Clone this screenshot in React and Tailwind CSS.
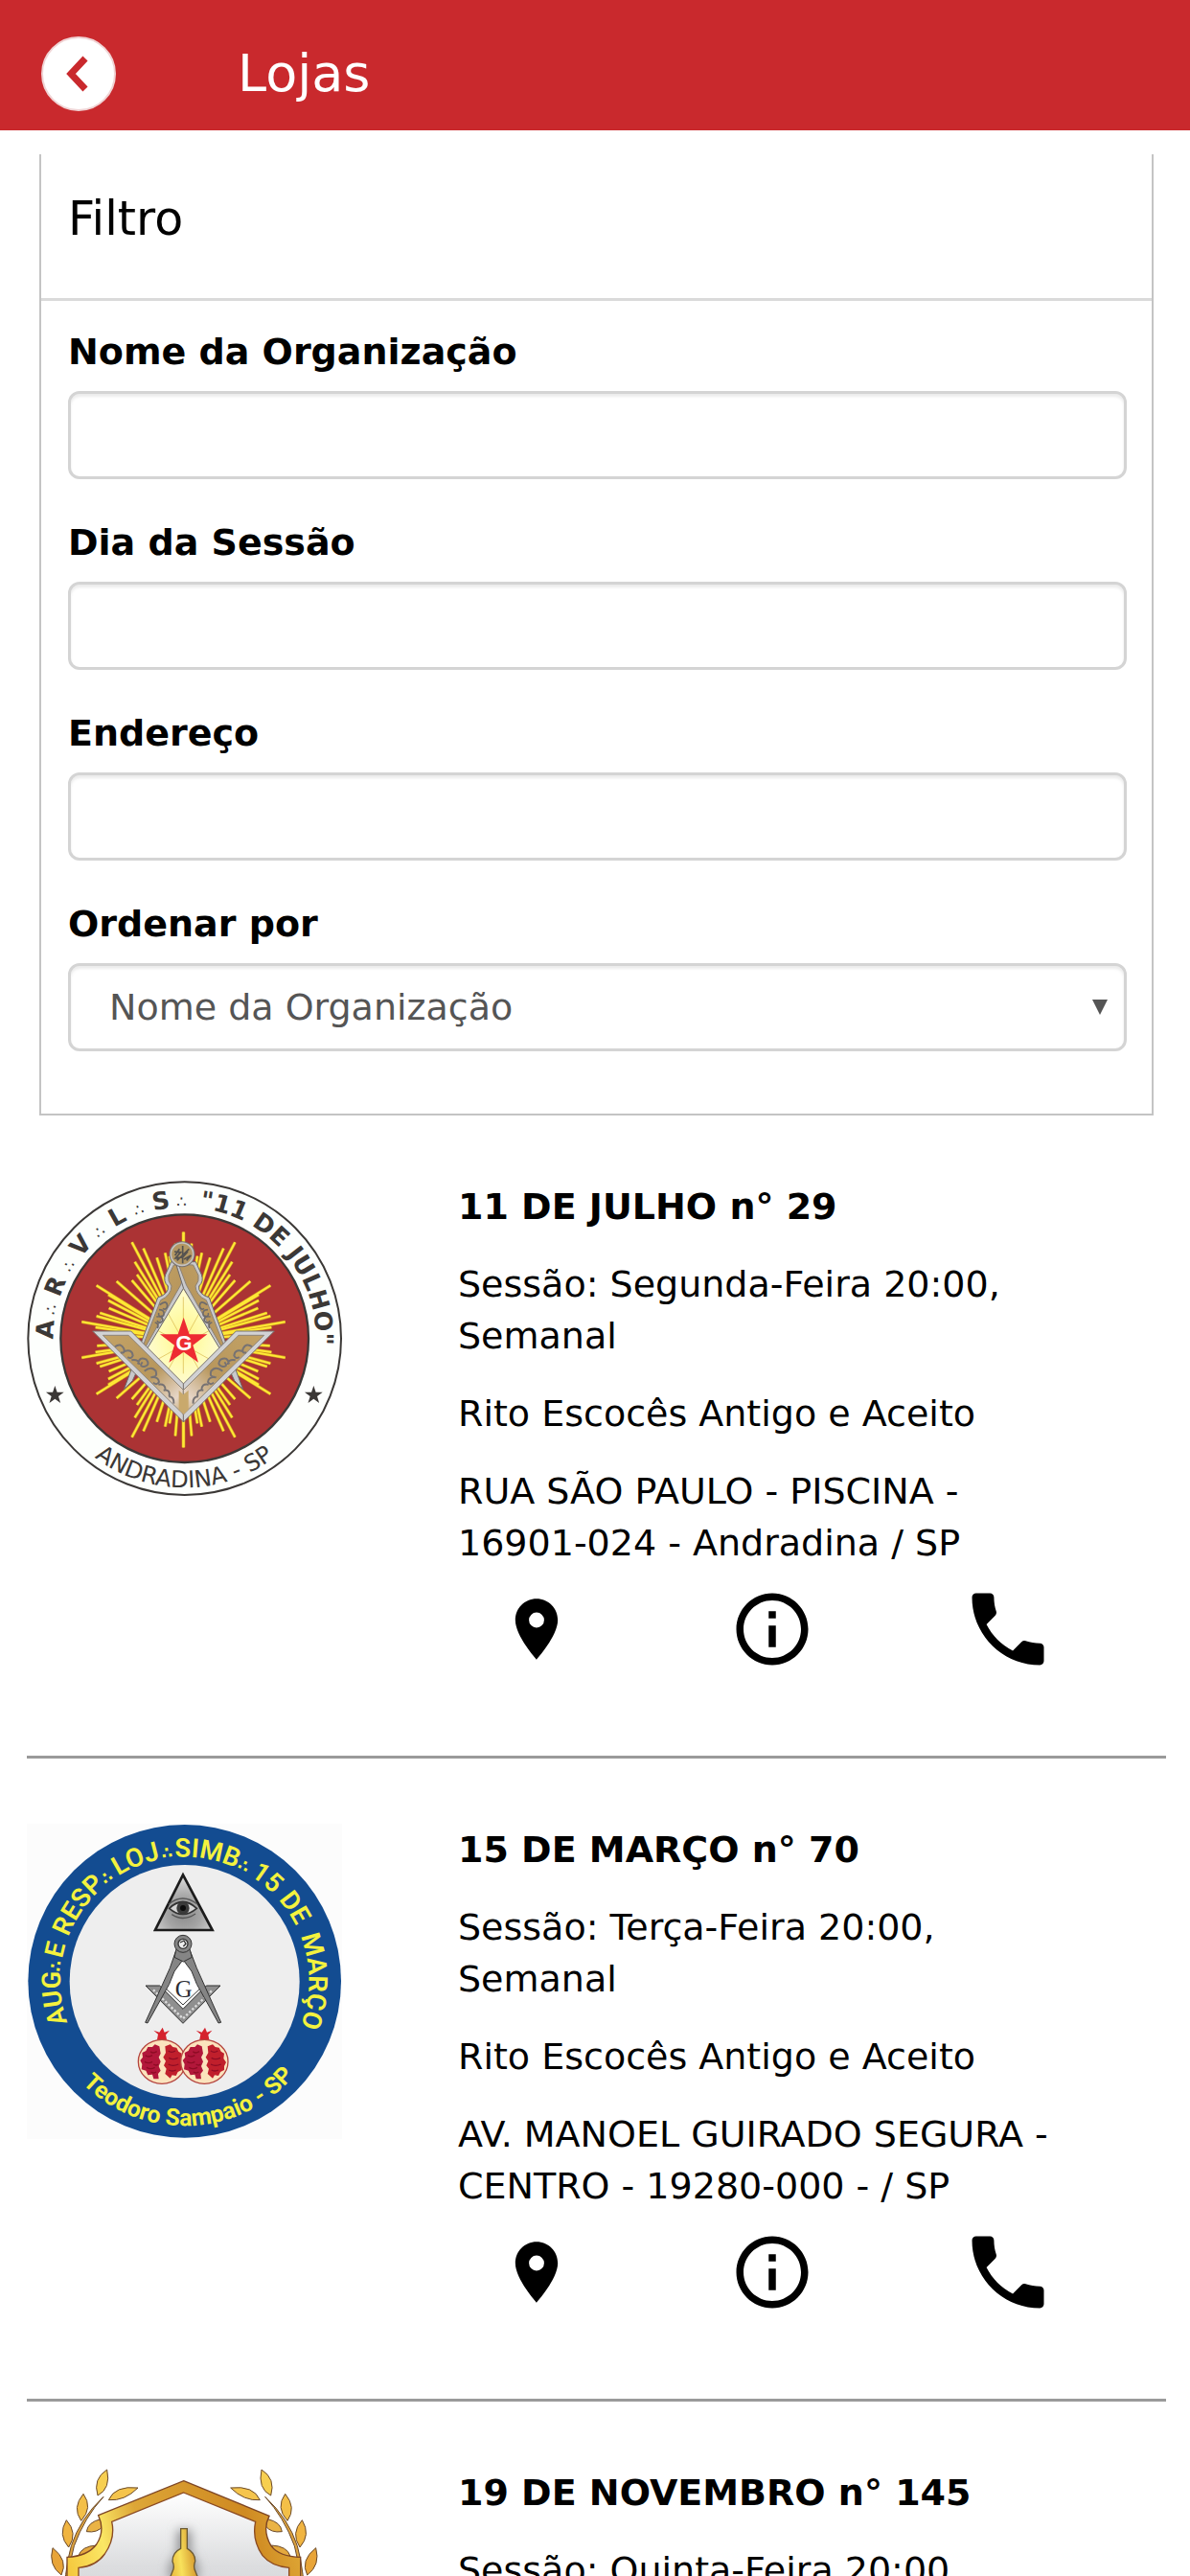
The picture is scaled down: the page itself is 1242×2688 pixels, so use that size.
import { useState } from 'react'
import { MdInfoOutline, MdPhone, MdPlace } from 'react-icons/md'

const RAY_ENDS = [
  [514, 197], [540, 233], [558, 272], [572, 262], [598, 277], [640, 248], [676, 229], [667, 290], [660, 330],
  [676, 348], [724, 351], [787, 364], [750, 393], [750, 411], [748, 435], [776, 450], [787, 460], [833, 478],
  [790, 495], [785, 515],
]

// every ray of one quadrant is repeated in the other three
const RAYS = RAY_ENDS.flatMap(([x, y]) => [
  [x, y],
  [1029 - x, y],
  [x, 1068 - y],
  [1029 - x, 1068 - y],
])

const STAR = '0,-76 18,-23 74,-23 29,11 46,65 0,32 -46,65 -29,11 -74,-23 -18,-23'

function CompassLeg() {
  return (
    <g strokeLinejoin="round">
      <path
        d="M476 290 L458 330 Q450 352 466 366 Q470 390 434 402 L328 690 L355 662 L402 560 L514 374 L540 290 Z"
        fill="#c9c9cb"
        stroke="#6b6869"
        strokeWidth="3"
      />
      <path
        d="M484 300 L468 332 Q464 350 477 366 Q476 395 443 410 L388 552 L396 556 L505 364 L530 298 Z"
        fill="url(#bronze)"
        stroke="#8b8176"
        strokeWidth="3"
      />
      <path
        d="M440 425 q22 -18 24 3 q-3 15 -14 8 M438 440 q20 0 14 18 q-18 8 -15 -8 M430 462 q20 -4 20 12 q-12 14 -18 0 M425 480 q14 2 8 18"
        fill="none"
        stroke="#6d6a6b"
        strokeWidth="5"
      />
    </g>
  )
}

function SquareArm() {
  return (
    <g>
      <path d="M230 507 L350 507 L515 672 L515 792 Z" fill="#d2d2d4" stroke="#77706c" strokeWidth="3" />
      <path d="M262 520 L342 520 L515 692 L515 768 Z" fill="url(#bronze)" stroke="#8f8578" strokeWidth="3" />
      <path
        d="M300 556 q18 -14 28 6 q4 16 -10 12 M330 570 q24 -8 26 14 q-6 12 -16 4 M352 598 q24 -4 24 14 M372 610 q4 -26 26 -14 q14 16 -6 22 q-18 0 -6 -14 M392 632 q22 -18 36 0 q6 20 -12 18 M412 652 q24 -4 26 14 q-8 12 -18 2 M436 674 q22 -4 22 18 M452 692 q22 -4 18 20 M468 712 q18 0 16 22"
        fill="none"
        stroke="#767273"
        strokeWidth="6"
      />
    </g>
  )
}

function LogoOnzeDeJulho() {
  return (
    <svg viewBox="24 36 987 987" className="block w-full" role="img" aria-label="11 DE JULHO">
      <defs>
        <linearGradient id="bronze" x1="0" y1="0" x2="1" y2="1">
          <stop offset="0" stopColor="#c3a265" />
          <stop offset="0.55" stopColor="#b8975d" />
          <stop offset="0.85" stopColor="#e6d6c8" />
          <stop offset="1" stopColor="#c5a364" />
        </linearGradient>
        <radialGradient id="glow">
          <stop offset="0" stopColor="#fff58a" />
          <stop offset="0.6" stopColor="#fffcb4" />
          <stop offset="1" stopColor="#fffad0" />
        </radialGradient>
        <path id="julhoTop" d="M107 530 A411 411 0 0 1 929 530 A411 411 0 0 1 900 680" />
        <path id="julhoBottom" d="M51 530 A467 467 0 0 0 985 530" />
      </defs>
      <circle cx="518" cy="530" r="490" fill="#fdfffd" stroke="#3b3836" strokeWidth="6" />
      <circle cx="518" cy="530" r="388" fill="#ab3334" stroke="#3b3836" strokeWidth="7" />
      <g stroke="#d09a20" strokeWidth="10">
        {RAYS.map(([x, y], i) => (
          <line key={i} x1="514" y1="534" x2={x} y2={y} />
        ))}
      </g>
      <g stroke="#ffe936" strokeWidth="6">
        {RAYS.map(([x, y], i) => (
          <line key={i} x1="514" y1="534" x2={x} y2={y} />
        ))}
      </g>
      <path d="M514 374 L632 560 L514 675 L398 560 Z" fill="url(#glow)" />
      <g stroke="#d8b548" strokeWidth="2">
        <path d="M514 400 V640 M425 500 L605 600 M605 500 L425 600 M460 440 L570 640 M570 440 L460 640" />
      </g>
      <CompassLeg />
      <g transform="matrix(-1 0 0 1 1029 0)">
        <CompassLeg />
      </g>
      <circle cx="510" cy="266" r="38" fill="#b39763" stroke="#77706c" strokeWidth="5" />
      <circle cx="510" cy="266" r="35" fill="none" stroke="#c4c2c0" strokeWidth="5" />
      <path
        d="M512 240 V295 M486 258 L506 260 L490 278 L512 276 L528 258 M494 286 L532 250 M516 282 L538 270 L524 286 M488 270 L502 250"
        fill="none"
        stroke="#55524f"
        strokeWidth="5"
      />
      <SquareArm />
      <g transform="matrix(-1 0 0 1 1029 0)">
        <SquareArm />
      </g>
      <path d="M500 692 L514 706 L530 692 L530 752 L515 767 L500 752 Z" fill="#c9a96c" />
      <polygon points={STAR} transform="translate(515 540)" fill="#ee2b32" />
      <text x="516" y="567" textAnchor="middle" fontSize="66" fontWeight="700" fill="#fff" fontFamily="Liberation Sans, sans-serif">
        G
      </text>
      <g fill="#3b3836" fontFamily="DejaVu Sans, sans-serif" fontWeight="700" fontSize="76" textAnchor="middle">
        <text><textPath href="#julhoTop" startOffset="27">A</textPath></text>
        <text><textPath href="#julhoTop" startOffset="158">R</textPath></text>
        <text><textPath href="#julhoTop" startOffset="300">V</textPath></text>
        <text><textPath href="#julhoTop" startOffset="438">L</textPath></text>
        <text><textPath href="#julhoTop" startOffset="575">S</textPath></text>
      </g>
      <g fill="#3b3836" fontFamily="DejaVu Sans, sans-serif" fontSize="50" textAnchor="middle">
        <text><textPath href="#julhoTop" startOffset="88">∴</textPath></text>
        <text><textPath href="#julhoTop" startOffset="230">∴</textPath></text>
        <text><textPath href="#julhoTop" startOffset="368">∴</textPath></text>
        <text><textPath href="#julhoTop" startOffset="504">∴</textPath></text>
        <text><textPath href="#julhoTop" startOffset="636">∴</textPath></text>
      </g>
      <text fill="#3b3836" fontFamily="DejaVu Sans, sans-serif" fontWeight="700" fontSize="76">
        <textPath href="#julhoTop" startOffset="692">&quot;11 DE JULHO&quot;</textPath>
      </text>
      <text fill="#3b3836" fontFamily="DejaVu Sans, sans-serif" fontSize="73" textAnchor="middle">
        <textPath href="#julhoBottom" startOffset="732">ANDRADINA - SP</textPath>
      </text>
      <polygon points={STAR} transform="translate(112 707) scale(0.38)" fill="#3b3836" />
      <polygon points={STAR} transform="translate(922 707) scale(0.38)" fill="#3b3836" />
    </svg>
  )
}

function Pomegranate({ x }) {
  return (
    <g transform={`translate(${x} 783)`}>
      <path d="M-16 -64 L-12 -86 L-26 -98 L-8 -92 L2 -107 L8 -92 L24 -98 L12 -84 L16 -64 Z" fill="#d5222d" />
      <ellipse rx="74" ry="69" fill="#fbe3bd" stroke="#b5443f" strokeWidth="4" />
      <path
        d="M-8 -48 L-22 -54 L-30 -46 L-44 -46 L-50 -34 L-62 -28 L-60 -14 L-68 -4 L-62 8 L-64 24 L-50 28 L-44 42 L-30 40 L-26 54 L-10 54 L-12 38 L-4 28 L-10 14 L-4 0 L-10 -14 L-4 -26 Z"
        fill="#b2173a"
      />
      <path
        d="M10 -48 L26 -54 L34 -46 L46 -44 L52 -32 L62 -26 L60 -10 L68 2 L62 14 L62 26 L50 32 L44 44 L32 42 L26 52 L10 38 L14 22 L6 12 L12 -2 L4 -14 L12 -28 Z"
        fill="#c01f2c"
      />
      <path
        d="M-52 -20 q10 8 22 0 M-54 0 q12 8 24 0 M-48 18 q12 8 26 0 M-36 -32 q8 8 20 0 M-26 8 q8 6 14 0 M-34 32 q8 6 16 0 M20 -34 q10 8 22 0 M22 -12 q12 8 28 0 M20 8 q14 8 32 0 M22 26 q10 6 22 0"
        fill="none"
        stroke="#8d0c24"
        strokeWidth="4"
      />
    </g>
  )
}

function LogoQuinzeDeMarco() {
  return (
    <svg viewBox="24 38 987 987" className="block w-full bg-[#fcfcfc]" role="img" aria-label="15 DE MARÇO">
      <defs>
        <radialGradient id="triangle" cx="0.5" cy="0.7" r="0.6">
          <stop offset="0" stopColor="#8a8a8a" />
          <stop offset="0.5" stopColor="#a5a5a5" />
          <stop offset="1" stopColor="#d2d2d2" />
        </radialGradient>
        <path id="marcoTop" d="M518 920 A389 389 0 0 1 518 142 A389 389 0 0 1 518 920" />
        <path id="marcoBottom" d="M65 531 A453 453 0 0 0 971 531" />
      </defs>
      <circle cx="518" cy="531" r="490" fill="#134c91" />
      <ellipse cx="518" cy="532" rx="360" ry="365" fill="#eeeeee" />
      <g fill="#f4f23e" fontFamily="Roboto, sans-serif" fontWeight="600" fontSize="82" textAnchor="middle">
        <text><textPath href="#marcoTop" startOffset="560">AUG</textPath></text>
        <text><textPath href="#marcoTop" startOffset="704">E</textPath></text>
        <text><textPath href="#marcoTop" startOffset="852">RESP</textPath></text>
        <text><textPath href="#marcoTop" startOffset="1074">LOJ</textPath></text>
        <text><textPath href="#marcoTop" startOffset="1290">SIMB</textPath></text>
        <text><textPath href="#marcoTop" startOffset="1484">15</textPath></text>
        <text><textPath href="#marcoTop" startOffset="1604">DE</textPath></text>
        <text><textPath href="#marcoTop" startOffset="1832">MARÇO</textPath></text>
      </g>
      <g fill="#f4f23e" fontFamily="DejaVu Sans, sans-serif" fontWeight="700" fontSize="50" textAnchor="middle">
        <text><textPath href="#marcoTop" startOffset="656">∴</textPath></text>
        <text><textPath href="#marcoTop" startOffset="970">∴</textPath></text>
        <text><textPath href="#marcoTop" startOffset="1168">∴</textPath></text>
        <text><textPath href="#marcoTop" startOffset="1406">∴</textPath></text>
      </g>
      <text fill="#f4f23e" fontFamily="Roboto, sans-serif" fontWeight="700" fontSize="74" textAnchor="middle">
        <textPath href="#marcoBottom" startOffset="728">Teodoro Sampaio - SP</textPath>
      </text>

      <path d="M513 198 L426 371 L605 371 Z" fill="url(#triangle)" stroke="#1c1c1c" strokeWidth="8" />
      <path d="M470 303 Q512 262 556 303 Q512 340 470 303 Z" fill="#d4d4d4" stroke="#333" strokeWidth="5" />
      <circle cx="513" cy="302" r="20" fill="#3a3a3a" />
      <circle cx="513" cy="302" r="9" fill="#0c0c0c" />
      <path d="M468 290 Q512 254 558 290 M478 322 Q514 346 552 320" fill="none" stroke="#555" strokeWidth="4" />

      <path d="M513 470 L582 545 L513 618 L442 545 Z" fill="#fff" />
      <ellipse cx="490" cy="505" rx="17" ry="30" fill="#fff" />
      <ellipse cx="538" cy="505" rx="17" ry="30" fill="#fff" />
      <path
        d="M396 545 L440 545 L513 618 L586 545 L630 545 L513 663 Z"
        fill="#8f8f8f"
        stroke="#2f2f2f"
        strokeWidth="3"
      />
      <path d="M420 558 L513 648 L606 558" fill="none" stroke="#ddd" strokeWidth="7" strokeDasharray="7 6" />
      <path d="M450 545 L513 605 L576 545" fill="none" stroke="#333" strokeWidth="3" />
      <g fill="#858585" stroke="#333" strokeWidth="3" strokeLinejoin="round">
        <path d="M490 438 L472 490 L395 660 L402 662 L470 540 L486 500 L514 462 Z" />
        <path d="M536 438 L556 490 L632 660 L624 662 L556 540 L540 500 L512 462 Z" />
        <path d="M492 430 L486 456 L514 470 L541 456 L534 430 Z" />
        <circle cx="513" cy="414" r="27" />
      </g>
      <circle cx="513" cy="414" r="15" fill="#eee" stroke="#333" strokeWidth="4" />
      <path d="M504 410 L516 404 L522 414 L514 422" fill="none" stroke="#333" strokeWidth="4" />
      <text x="515" y="582" textAnchor="middle" fontSize="74" fill="#2d2d33" fontFamily="Liberation Serif, serif">
        G
      </text>

      <Pomegranate x={447} />
      <Pomegranate x={580} />
    </svg>
  )
}

function LaurelBranch() {
  return (
    <g stroke="#6b4a2b" strokeWidth="3">
      <path d="M264 166 Q205 230 172 320 Q150 400 150 520 L140 520 Q140 400 163 320 Q190 235 264 166 Z" fill="#dda33f" />
      <path d="M275 81 Q230 110 246 162 Q288 140 275 81 Z" fill="#f7cf50" />
      <path d="M372 138 Q300 130 280 176 Q330 180 372 138 Z" fill="#f5c44c" />
      <path d="M201 157 Q165 200 194 241 Q232 200 201 157 Z" fill="#f3bf48" />
      <path d="M256 236 Q215 245 211 275 Q245 280 262 258 Z" fill="#eab345" />
      <path d="M148 239 Q120 285 155 324 Q185 280 148 239 Z" fill="#f0b441" />
      <path d="M244 318 Q195 320 185 352 L225 352 Z" fill="#e4a93e" />
      <path d="M105 326 Q90 380 132 411 Q155 365 105 326 Z" fill="#e8a438" />
    </g>
  )
}

function LogoDezenoveDeNovembro() {
  return (
    <svg viewBox="24 72 987 987" className="block w-full" role="img" aria-label="19 DE NOVEMBRO">
      <defs>
        <linearGradient id="gold" x1="0" y1="0.3" x2="1" y2="0">
          <stop offset="0" stopColor="#f5c93f" />
          <stop offset="0.16" stopColor="#fbe765" />
          <stop offset="0.32" stopColor="#dda637" />
          <stop offset="0.75" stopColor="#cf8a22" />
          <stop offset="1" stopColor="#e3b03c" />
        </linearGradient>
        <linearGradient id="bell" x1="0" y1="0.6" x2="1" y2="0.4">
          <stop offset="0.1" stopColor="#e9b83d" />
          <stop offset="0.4" stopColor="#f8e25c" />
          <stop offset="0.8" stopColor="#d79b30" />
        </linearGradient>
        <linearGradient id="silver" x1="0" y1="0" x2="0" y2="1">
          <stop offset="0" stopColor="#ffffff" />
          <stop offset="0.3" stopColor="#dcdddf" />
          <stop offset="1" stopColor="#c4c5c8" />
        </linearGradient>
        <filter id="soft" x="-1" y="-0.5" width="3" height="2">
          <feGaussianBlur stdDeviation="16" />
        </filter>
      </defs>
      <LaurelBranch />
      <g transform="matrix(-1 0 0 1 1034 0)">
        <LaurelBranch />
      </g>
      <path
        d="M515 116 L783 226 Q760 270 789 320 Q815 354 881 355 L881 700 Q780 860 515 960 Q250 860 150 700 L150 355 Q215 352 242 315 Q270 272 248 224 Z"
        fill="url(#gold)"
        stroke="#7d4524"
        strokeWidth="4"
      />
      <path
        d="M515 153 L740 244 Q728 300 762 350 Q790 384 845 388 L845 690 Q760 820 515 915 Q270 820 186 690 L186 388 Q240 384 268 345 Q302 295 290 244 Z"
        fill="url(#silver)"
        stroke="#8a4a22"
        strokeWidth="4"
      />
      <path d="M495 270 H538 V345 Q572 380 556 430 H474 Q458 380 495 345 Z" fill="#8e8f91" filter="url(#soft)" />
      <path
        d="M506 266 H526 V328 Q552 342 551 368 Q544 385 552 400 L572 450 H460 L480 400 Q488 385 480 368 Q480 340 506 328 Z"
        fill="url(#bell)"
        stroke="#6b5a33"
        strokeWidth="4"
      />
    </svg>
  )
}

const lojas = [
  {
    id: 29,
    nome: '11 DE JULHO n° 29',
    sessao: 'Segunda-Feira 20:00, Semanal',
    rito: 'Rito Escocês Antigo e Aceito',
    endereco: 'RUA SÃO PAULO - PISCINA - 16901-024 - Andradina / SP',
    Logo: LogoOnzeDeJulho,
  },
  {
    id: 70,
    nome: '15 DE MARÇO n° 70',
    sessao: 'Terça-Feira 20:00, Semanal',
    rito: 'Rito Escocês Antigo e Aceito',
    endereco: 'AV. MANOEL GUIRADO SEGURA - CENTRO - 19280-000 - / SP',
    Logo: LogoQuinzeDeMarco,
  },
  {
    id: 145,
    nome: '19 DE NOVEMBRO n° 145',
    sessao: 'Quinta-Feira 20:00,',
    Logo: LogoDezenoveDeNovembro,
  },
]

const fieldClass =
  'block w-full h-[92px] rounded-xl border-[3px] border-[#d4d4d4] bg-white px-10 text-[38px] text-[#555] shadow-[inset_0_3px_3px_rgba(0,0,0,0.08)]'

function Field({ id, label, children }) {
  return (
    <div className="flex flex-col gap-[14px]">
      <label htmlFor={id} className="font-bold">
        {label}
      </label>
      {children}
    </div>
  )
}

function LojaItem({ loja }) {
  const { Logo } = loja

  return (
    <li className="flex border-b-[3px] border-[#9a9a9a] pb-[82px] mb-[68px]">
      <div className="w-[409px] shrink-0">
        <div className="w-[329px]">
          <Logo />
        </div>
      </div>
      <div className="flex-1 min-w-0 pr-[42px]">
        <div className="flex flex-col gap-[27px] px-[41px]">
          <h2 className="font-bold">{loja.nome}</h2>
          <p>{`Sessão: ${loja.sessao}`}</p>
          {loja.rito && <p>{loja.rito}</p>}
          {loja.endereco && <p>{loja.endereco}</p>}
        </div>
        <div className="grid grid-cols-3 h-[100px] mt-[13px]">
          <a href="#mapa" aria-label="Mapa" className="flex items-center justify-center">
            <MdPlace size={76} />
          </a>
          <a href="#detalhes" aria-label="Detalhes" className="flex items-center justify-center">
            <MdInfoOutline size={90} />
          </a>
          <a href="#telefone" aria-label="Telefone" className="flex items-center justify-center">
            <MdPhone size={100} />
          </a>
        </div>
      </div>
    </li>
  )
}

export default function App() {
  const [nome, setNome] = useState('')
  const [dia, setDia] = useState('')
  const [endereco, setEndereco] = useState('')
  const [ordem, setOrdem] = useState('nome')

  return (
    <div className="h-screen overflow-hidden bg-white text-black text-[38px] leading-[54px] font-['Verdana','DejaVu_Sans',sans-serif]">
      <header className="flex items-center gap-[127px] bg-[#c9292d] h-[136px] pt-[18px] pl-[43px]">
        <button
          type="button"
          aria-label="Voltar"
          className="flex items-center justify-center size-[78px] rounded-full bg-white border-2 border-[#f0d4d5]"
        >
          <svg viewBox="0 0 24 38" className="h-[38px] w-6 mr-1" fill="none" stroke="#c9292d" strokeWidth="7">
            <path d="M21 3 L6 19 L21 35" />
          </svg>
        </button>
        <h1 className="text-[54px] text-white">Lojas</h1>
      </header>

      <main className="pt-[25px] pl-7 pr-[25px]">
        <form className="mx-[13px] border-2 border-t-0 border-[#c4c4c4]">
          <h2 className="pt-10 pb-[54px] px-7 text-[49px] leading-[56px] border-b-[3px] border-[#dadada]">Filtro</h2>
          <div className="flex flex-col gap-[39px] pt-[26px] pb-[65px] pl-7 pr-[26px]">
            <Field id="nome" label="Nome da Organização">
              <input id="nome" type="text" value={nome} onChange={(e) => setNome(e.target.value)} className={fieldClass} />
            </Field>
            <Field id="dia" label="Dia da Sessão">
              <input id="dia" type="text" value={dia} onChange={(e) => setDia(e.target.value)} className={fieldClass} />
            </Field>
            <Field id="endereco" label="Endereço">
              <input
                id="endereco"
                type="text"
                value={endereco}
                onChange={(e) => setEndereco(e.target.value)}
                className={fieldClass}
              />
            </Field>
            <Field id="ordem" label="Ordenar por">
              <div className="relative">
                <select
                  id="ordem"
                  value={ordem}
                  onChange={(e) => setOrdem(e.target.value)}
                  className={`${fieldClass} appearance-none`}
                >
                  <option value="nome">Nome da Organização</option>
                </select>
                <svg
                  viewBox="0 0 16 16"
                  className="absolute right-5 top-1/2 -translate-y-1/2 size-4 pointer-events-none"
                  fill="#555"
                >
                  <path d="M0 0 H16 L8 16 Z" />
                </svg>
              </div>
            </Field>
          </div>
        </form>

        <ul className="mt-[68px]">
          {lojas.map((loja) => (
            <LojaItem key={loja.id} loja={loja} />
          ))}
        </ul>
      </main>
    </div>
  )
}
